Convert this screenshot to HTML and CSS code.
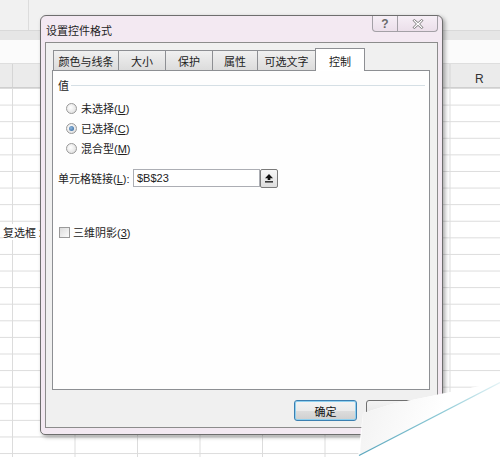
FILE: index.html
```html
<!DOCTYPE html>
<html lang="zh-CN">
<head>
<meta charset="utf-8">
<title>设置控件格式</title>
<link rel="stylesheet" href="styles.css">
</head>
<body>
<div class="sheet">
  <div class="ribbon"><div class="ribbon-cell"></div></div>
  <div class="ribbon-strip"></div>
  <div class="formula"></div>
  <div class="colhead"><span class="col-r">R</span></div>
  <div class="grid"><span class="floating-label">复选框 2</span></div>
</div>

<div class="dialog">
  <div class="titlebar">
    <span class="title">设置控件格式</span>
    <div class="caption-btns">
      <span class="cap-btn help">?</span>
      <span class="cap-btn close">
        <svg width="12" height="10" viewBox="0 0 12 10"><path d="M1 1.5 L2.5 0.5 L6 3.6 L9.5 0.5 L11 1.5 L7.6 5 L11 8.5 L9.5 9.5 L6 6.4 L2.5 9.5 L1 8.5 L4.4 5 Z" fill="#fff" stroke="#6d6d6d" stroke-width="0.9"/></svg>
      </span>
    </div>
  </div>
  <div class="client">
    <div class="tabs">
      <span class="tab w65">颜色与线条</span>
      <span class="tab w47">大小</span>
      <span class="tab w47">保护</span>
      <span class="tab w45">属性</span>
      <span class="tab w58">可选文字</span>
      <span class="tab active">控制</span>
    </div>
    <div class="panel">
      <div class="group-head"><span>值</span><span class="rule"></span></div>
      <div class="radio-row"><span class="radio"></span><span>未选择(<u>U</u>)</span></div>
      <div class="radio-row"><span class="radio checked"></span><span>已选择(<u>C</u>)</span></div>
      <div class="radio-row"><span class="radio"></span><span>混合型(<u>M</u>)</span></div>
      <div class="link-row">
        <span class="link-label">单元格链接(<u>L</u>):</span>
        <span class="ref-input">$B$23</span>
        <span class="ref-btn">
          <svg width="10" height="10" viewBox="0 0 10 10"><path d="M5 1 L9 5.2 L6.3 5.2 L6.3 7 L3.7 7 L3.7 5.2 L1 5.2 Z" fill="#111"/><rect x="1" y="8.2" width="8" height="1.3" fill="#111"/></svg>
        </span>
      </div>
      <div class="check-row"><span class="checkbox"></span><span>三维阴影(<u>3</u>)</span></div>
    </div>
    <div class="button-row">
      <span class="btn default">确定</span>
      <span class="btn">取消</span>
    </div>
  </div>
</div>

<svg class="curl" width="500" height="457" viewBox="0 0 500 457">
  <defs>
    <linearGradient id="flap" x1="363" y1="413" x2="430" y2="440" gradientUnits="userSpaceOnUse">
      <stop offset="0" stop-color="#f3f3f3"/>
      <stop offset="1" stop-color="#ffffff"/>
    </linearGradient>
    <linearGradient id="edge" x1="360" y1="455" x2="500" y2="383" gradientUnits="userSpaceOnUse">
      <stop offset="0" stop-color="#5aa6bd"/>
      <stop offset="0.6" stop-color="#8fcad6"/>
      <stop offset="1" stop-color="#e4f3f6"/>
    </linearGradient>
  </defs>
  <polygon points="363,413 392,404 500,382 500,457 358,457" fill="#ffffff"/>
  <polygon points="363,413 392,404 500,382 360,455" fill="url(#flap)"/>
  <line x1="359" y1="455.5" x2="500" y2="382.5" stroke="url(#edge)" stroke-width="1.4"/>
</svg>
</body>
</html>
```
FILE: styles.css
```css
* { box-sizing: border-box; }

html, body {
  margin: 0;
  padding: 0;
  width: 500px;
  height: 457px;
  overflow: hidden;
  background: #ffffff;
  font-family: "Liberation Sans", "Noto Sans CJK SC", sans-serif;
  font-size: 11px;
  color: #222;
}

u { text-decoration: underline; text-underline-offset: 1px; }

/* ---------- spreadsheet background ---------- */
.sheet {
  width: 500px;
  height: 457px;
  display: flex;
  flex-direction: column;
}
.ribbon {
  height: 30px;
  background: #f1f1f1;
}
.ribbon-cell {
  width: 29px;
  height: 30px;
  border-right: 1px solid #dcdcdc;
}
.ribbon-strip {
  height: 10px;
  background: #e6e6e6;
  border-top: 1px solid #d9d9d9;
}
.formula {
  height: 23px;
  background: #fbfbfb;
}
.colhead {
  height: 25px;
  background: #ebebeb;
  border-top: 1px solid #dedede;
  border-bottom: 1px solid #cfcfcf;
  display: flex;
  align-items: center;
  background-image: linear-gradient(to right, #d5d5d5 1px, transparent 1px);
  background-size: 62.5px 100%;
  background-position: 12px 0;
}
.col-r {
  margin-left: 475px;
  font-size: 12px;
  color: #333;
  padding-top: 6px;
}
.grid {
  flex: 1;
  position: relative;
  background-color: #ffffff;
  background-image:
    linear-gradient(to right, #dcdcdc 1px, transparent 1px),
    linear-gradient(to bottom, #dcdcdc 1px, transparent 1px);
  background-size: 62.5px 16.6px, 62.5px 16.6px;
  background-position: 12px 0, 0 16.6px;
}
.floating-label {
  position: absolute;
  left: 3px;
  top: 136px;
  font-size: 11px;
  color: #222;
  background: #fff;
}

/* ---------- dialog ---------- */
.dialog {
  position: absolute;
  left: 40px;
  top: 15px;
  width: 403px;
  height: 420px;
  border: 1px solid #6e6e6e;
  border-radius: 6px 6px 5px 5px;
  background: #f3e9f2;
  padding: 0 4px 6px 4px;
  display: flex;
  flex-direction: column;
  box-shadow: 2px 2px 4px rgba(0, 0, 0, 0.35);
}
.titlebar {
  height: 26px;
  display: flex;
  justify-content: space-between;
  align-items: flex-start;
}
.title {
  margin-top: 6px;
  margin-left: 1px;
  font-size: 11px;
  color: #1e1e1e;
}
.caption-btns {
  display: flex;
}
.cap-btn {
  height: 16px;
  display: flex;
  align-items: center;
  justify-content: center;
  border: 1px solid #a3a0a6;
  border-top: none;
  background: linear-gradient(#f6eff6, #ebdfea);
  color: #555;
}
.help {
  width: 26px;
  border-radius: 0 0 0 4px;
  font-size: 12px;
  font-weight: bold;
  color: #6a6a6a;
}
.close {
  width: 40px;
  border-left: none;
  border-radius: 0 0 4px 0;
}

.client {
  flex: 1;
  border: 1px solid #8c8c8c;
  background: #f0f0f0;
  padding: 5px 7px 0 6px;
  display: flex;
  flex-direction: column;
}
.tabs {
  display: flex;
  align-items: flex-end;
  height: 22px;
  padding-left: 1px;
  position: relative;
  z-index: 1;
}
.tab {
  height: 20px;
  border: 1px solid #8d8f93;
  border-bottom: none;
  margin-right: -1px;
  background: linear-gradient(#f0f0f0, #dcdcdc);
  display: flex;
  align-items: center;
  justify-content: center;
  font-size: 11px;
  color: #222;
}
.w65 { width: 66px; }
.w47 { width: 48px; }
.w45 { width: 46px; }
.w58 { width: 59px; }
.tab.active {
  width: 50px;
  height: 23px;
  margin-bottom: -1px;
  background: #ffffff;
  padding-top: 1px;
}
.panel {
  height: 320px;
  border: 1px solid #8d8f93;
  background: #fefefe;
  display: flex;
  flex-direction: column;
  padding-left: 5px;
}
.group-head {
  margin-top: 7px;
  height: 14px;
  display: flex;
  align-items: center;
  padding-right: 4px;
}
.rule {
  flex: 1;
  height: 1px;
  background: #d5dfe5;
  margin-left: 2px;
  margin-top: 1px;
}
.radio-row {
  height: 20px;
  display: flex;
  align-items: center;
  gap: 4px;
  padding-left: 8px;
}
.group-head + .radio-row { margin-top: 6px; }
.radio {
  width: 11px;
  height: 11px;
  border-radius: 50%;
  border: 1px solid #9a9a9a;
  background: radial-gradient(circle at 40% 40%, #ffffff 0, #e4e4e4 70%, #d4d4d4 100%);
  display: flex;
  align-items: center;
  justify-content: center;
}
.radio.checked::after {
  content: "";
  width: 5px;
  height: 5px;
  border-radius: 50%;
  background: radial-gradient(circle at 40% 40%, #8fb8de, #2a5e96);
}
.link-row {
  margin-top: 11px;
  height: 18px;
  display: flex;
  align-items: center;
}
.link-label {
  width: 75px;
}
.ref-input {
  width: 127px;
  height: 18px;
  border: 1px solid #acaeb4;
  background: #fff;
  padding-left: 3px;
  display: flex;
  align-items: center;
  font-size: 11px;
}
.ref-btn {
  width: 18px;
  height: 19px;
  border: 1px solid #7a7a7a;
  border-radius: 2px;
  background: linear-gradient(#f7f7f7, #dedede);
  display: flex;
  align-items: center;
  justify-content: center;
}
.check-row {
  margin-top: 38px;
  height: 14px;
  display: flex;
  align-items: center;
  gap: 3px;
  padding-left: 1px;
}
.checkbox {
  width: 11px;
  height: 11px;
  border: 1px solid #9a9a9a;
  background: linear-gradient(135deg, #dcdcdc, #fbfbfb);
}

.button-row {
  margin-top: 10px;
  display: flex;
  justify-content: flex-end;
  gap: 9px;
  padding-right: 1px;
}
.btn {
  width: 63px;
  height: 21px;
  border: 1px solid #707070;
  border-radius: 3px;
  background: linear-gradient(#f3f3f3 0%, #ebebeb 50%, #dddddd 51%, #cfcfcf 100%);
  display: flex;
  align-items: center;
  justify-content: center;
  font-size: 11px;
  color: #111;
}
.btn.default {
  border-color: #3c7fb1;
  box-shadow: inset 0 0 0 1px #8fd0ef;
}

/* ---------- page curl overlay ---------- */
.curl {
  position: absolute;
  left: 0;
  top: 0;
  pointer-events: none;
}
```
